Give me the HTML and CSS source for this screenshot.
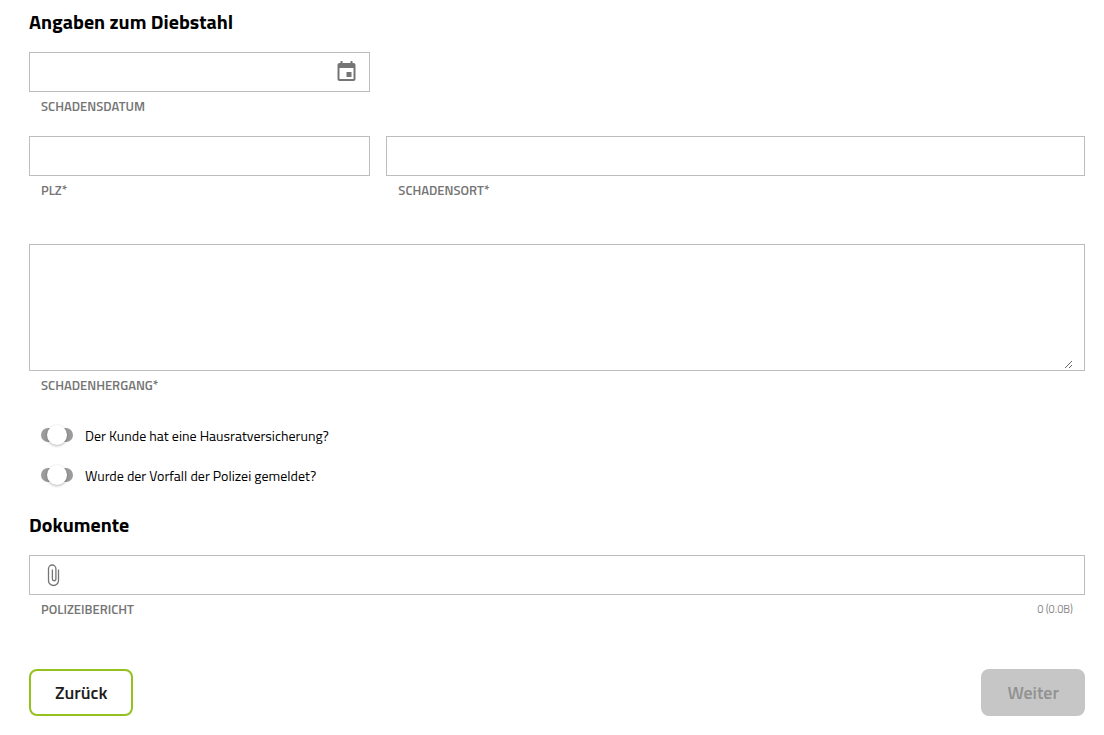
FILE: index.html
```html
<!DOCTYPE html>
<html lang="de">
<head>
<meta charset="utf-8">
<meta name="viewport" content="width=device-width, initial-scale=1">
<title>Angaben zum Diebstahl</title>
<link rel="stylesheet" href="styles.css">
</head>
<body>
<form class="claim-form">
  <h2 class="heading">Angaben zum Diebstahl</h2>
  <div class="grid">
    <div class="field">
      <div class="box">
        <input class="input" id="datum" type="text">
        <button class="icon-button" type="button" aria-label="Kalender">
          <svg width="24" height="24" viewBox="0 0 24 24" fill="currentColor" aria-hidden="true"><path d="M17.500 12h-5v5h5v-5zM16.500 1v2h-8V1h-2v2h-1c-1.110 0-1.990.9-1.990 2L3.500 19c0 1.100.89 2 2 2h14c1.100 0 2-.9 2-2V5c0-1.100-.9-2-2-2h-1V1h-2zm3 18h-14V8h14v11z"/></svg>
        </button>
      </div>
      <div class="caption"><label for="datum">SCHADENSDATUM</label></div>
    </div>
    <div class="field first">
      <div class="box"><input class="input" id="plz" type="text"></div>
      <div class="caption"><label for="plz">PLZ*</label></div>
    </div>
    <div class="field wide">
      <div class="box"><input class="input" id="ort" type="text"></div>
      <div class="caption"><label for="ort">SCHADENSORT*</label></div>
    </div>
  </div>
  <div class="field story">
    <div class="box tall"><textarea class="textarea" id="hergang"></textarea></div>
    <div class="caption"><label for="hergang">SCHADENHERGANG*</label></div>
  </div>
  <div class="toggles">
    <label class="toggle"><input class="switch" type="checkbox"><span class="toggle-text">Der Kunde hat eine Hausratversicherung?</span></label>
    <label class="toggle"><input class="switch" type="checkbox"><span class="toggle-text">Wurde der Vorfall der Polizei gemeldet?</span></label>
  </div>
  <h2 class="heading">Dokumente</h2>
  <div class="field">
    <div class="box">
      <button class="icon-button" type="button" aria-label="Datei anhängen">
        <svg width="24" height="24" viewBox="0 0 24 24" fill="none" stroke="currentColor" stroke-width="1.3" aria-hidden="true"><path d="M17.500 6.500v11a5 5 0 0 1-10 0V5.700a3.700 3.700 0 0 1 7.400 0v10.300a1.750 1.750 0 0 1-3.500 0V6.500"/></svg>
      </button>
      <input class="input" id="bericht" type="text" readonly>
    </div>
    <div class="caption"><label for="bericht">POLIZEIBERICHT</label><span class="size">0 (0.0B)</span></div>
  </div>
  <div class="actions">
    <button class="button" type="button">Zurück</button>
    <button class="button next" type="submit" disabled>Weiter</button>
  </div>
</form>
</body>
</html>
```
FILE: styles.css
```css
* { box-sizing: border-box; }

body {
  margin: 0;
  background: #fff;
  color: #000;
  font-family: "Titillium Web", Roboto, "Noto Sans", sans-serif;
  font-size: 14px;
}

.claim-form { padding: 8px 19px 19px 29px; }

.heading {
  margin: 0 0 16px;
  font-size: 20px;
  line-height: 28px;
  font-weight: 700;
}

.grid {
  display: grid;
  grid-template-columns: repeat(3, minmax(0, 1fr));
  column-gap: 16px;
}

.first { grid-column: 1; }
.wide { grid-column: 2 / 4; }
.story { margin-top: 24px; }

.box {
  display: flex;
  align-items: center;
  height: 40px;
  padding: 0 11px;
  border: 1px solid #bdbdbd;
}

.box:focus-within { border-color: #95c11f; }

.tall {
  height: auto;
  padding: 8px 11px 1px;
}

.input,
.textarea {
  flex: 1;
  min-width: 0;
  padding: 0;
  border: 0;
  outline: 0;
  background: transparent;
  font: inherit;
}

.input { height: 100%; }

.textarea {
  display: block;
  height: 116px;
  margin: 0;
  resize: vertical;
}

.caption {
  display: flex;
  justify-content: space-between;
  height: 44px;
  padding: 4px 12px 0;
  color: #757575;
  font-size: 13px;
  line-height: 20px;
  font-weight: 600;
}

.size {
  font-size: 11px;
  font-weight: 400;
  color: #8a8a8a;
}

.icon-button {
  display: flex;
  padding: 0;
  border: 0;
  background: none;
  color: #757575;
}

.toggles { margin-bottom: 16px; }

.toggle {
  display: flex;
  align-items: center;
  gap: 12px;
  height: 40px;
  padding-left: 12px;
  line-height: 20px;
}

.toggle-text { padding-top: 2px; }

.toggles,
.toggle { width: fit-content; }

.switch {
  appearance: none;
  display: flex;
  align-items: center;
  justify-content: center;
  width: 32px;
  height: 14px;
  margin: 0;
  border-radius: 7px;
  background: #9b9b9b;
}

.switch::before {
  content: "";
  width: 20px;
  height: 20px;
  flex: none;
  border-radius: 50%;
  background: #fff;
  box-shadow: 0 1px 3px rgba(0, 0, 0, 0.3);
}

.switch:checked { background: #95c11f; }

.actions {
  display: flex;
  justify-content: space-between;
  margin-top: 30px;
}

.button {
  height: 47px;
  padding: 0 24px;
  border: 2px solid #95c11f;
  border-radius: 8px;
  background: #fff;
  color: #1d1d1b;
  font: inherit;
  font-size: 18px;
  font-weight: 600;
}

.next {
  border-color: #c6c6c6;
  background: #c6c6c6;
  color: #929292;
}
```
